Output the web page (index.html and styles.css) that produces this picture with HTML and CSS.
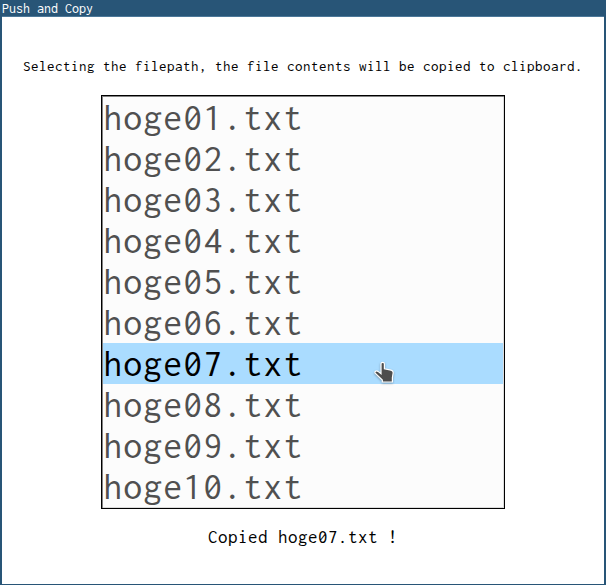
FILE: index.html
```
<!DOCTYPE html>
<html lang="en">
<head>
<meta charset="utf-8">
<title>Push and Copy</title>
<link rel="stylesheet" href="styles.css">
</head>
<body>
<div class="window">
  <header class="titlebar">Push and Copy</header>
  <main class="content">
    <p class="hint">Selecting the filepath, the file contents will be copied to clipboard.</p>
    <ul class="files">
      <li>hoge01.txt</li>
      <li>hoge02.txt</li>
      <li>hoge03.txt</li>
      <li>hoge04.txt</li>
      <li>hoge05.txt</li>
      <li>hoge06.txt</li>
      <li class="selected">hoge07.txt
        <svg class="pointer" width="22" height="24" viewBox="0 0 22 24"><path d="M7 2.8C7 .8 10.4 .8 10.4 2.8V7.8L17 9.2Q19.3 9.8 19.2 11.8L18.4 16.5V21H8.3V19L1.2 12.2C.2 10.6 2.3 9.2 4 10.4L7 12.8Z"/></svg>
      </li>
      <li>hoge08.txt</li>
      <li>hoge09.txt</li>
      <li>hoge10.txt</li>
    </ul>
    <p class="status">Copied hoge07.txt !</p>
  </main>
</div>
</body>
</html>
```
FILE: styles.css
```
* { box-sizing: border-box; }
body {
  margin: 0;
  font-family: "Inconsolata", "Noto Sans Mono CJK JP", "Liberation Mono", monospace;
  color: #000;
  background: #fff;
}
.window {
  height: 585px;
  display: flex;
  flex-direction: column;
  border: solid #285577;
  border-width: 0 2px 1px;
  overflow: hidden;
}
.titlebar {
  height: 17px;
  margin: 0 -2px;
  padding-left: 2px;
  flex: none;
  background: #285577;
  border-bottom: 1px solid #4c7899;
  color: #fff;
  font-size: 14px;
  line-height: 17px;
}
.content {
  display: flex;
  flex-direction: column;
  align-items: center;
  padding-top: 39px;
}
.hint {
  margin: 0 0 19px;
  font-size: 15px;
  letter-spacing: .5px;
  line-height: 20px;
  white-space: nowrap;
}
.files {
  width: 404px;
  margin: 0;
  padding: 1px;
  list-style: none;
  border: 1px solid #000;
  box-shadow: inset 1px 1px #828282, inset -1px -1px #dcdcdc;
  background: #fcfcfc;
  color: #505050;
  font-size: 38px;
  letter-spacing: 1px;
}
.files li {
  height: 41px;
  padding-left: .3px;
  line-height: 40px;
  position: relative;
}
.files .selected {
  background: #aadcff;
  color: #000;
}
.pointer {
  position: absolute;
  left: 271px;
  top: 18px;
  fill: #4d4d4d;
  stroke: #fff;
  stroke-width: 1.2;
  filter: drop-shadow(0 1px 1px rgba(0, 0, 0, .3));
}
.status {
  margin: 16px 0 0;
  font-size: 19px;
  letter-spacing: .5px;
  line-height: 24px;
}
```
